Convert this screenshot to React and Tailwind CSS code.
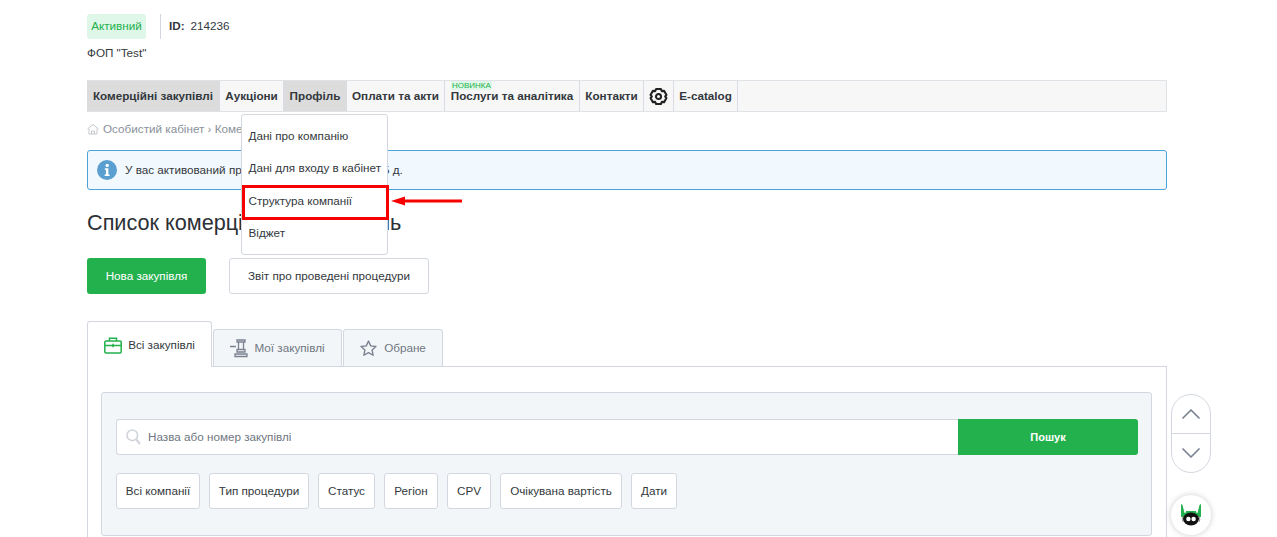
import React from "react";
import { ChevronUp, ChevronDown } from "lucide-react";

const navItems = [
  ["Комерційні закупівлі", "w-[133px]", true],
  ["Аукціони", "w-[64px]", false],
  ["Профіль", "w-[63px]", true],
  ["Оплати та акти", "w-[98px]", false],
];

function NavItem({ label, w, active }) {
  return (
    <div className={`${w} h-full flex items-center justify-center border-r border-[#d9dde3] text-[11.7px] font-bold text-[#33383d] ${active ? "bg-[#dcdcdc]" : ""}`}>
      {label}
    </div>
  );
}

function Filter({ children, w }) {
  return (
    <div className={`${w} h-[36px] flex items-center justify-center bg-white border border-[#d3d8e0] rounded-[3px] text-[11.7px] text-[#33383d]`}>
      {children}
    </div>
  );
}

export default function App() {
  return (
    <div className="relative h-[537px] w-[1277px] overflow-hidden bg-white text-[#33383d]" style={{ fontFamily: '"Liberation Sans", Arial, sans-serif' }}>
      <div className="ml-[87px] w-[1080px] pt-[14px]">
        <div className="flex items-center h-[25px]">
          <div className="w-[59px] h-[25px] pb-[2px] flex items-center justify-center rounded-[3px] bg-[#dff7e8] text-[11.7px] text-[#23b14d]">Активний</div>
          <div className="ml-[14px] w-px h-[25px] bg-[#d3d8e0]"></div>
          <div className="ml-[8px] -mt-[2px] text-[11.7px]"><span className="font-bold">ID:</span><span className="ml-[6px]">214236</span></div>
        </div>
        <div className="mt-[7px] h-[14px] leading-[14px] text-[11.7px]">ФОП "Test"</div>

        <div className="mt-[20px] h-[32px] flex bg-[#f7f7f7] border border-[#dfe2e6] border-l-0">
          {navItems.map(([l, w, a]) => <NavItem key={l} label={l} w={w} active={a} />)}
          <div className="relative w-[135px] h-full flex items-center justify-center border-r border-[#d9dde3] text-[11.7px] font-bold">
            Послуги та аналітика
            <span className="absolute left-[6px] top-0 h-[9px] leading-[9px] px-px bg-[#dff7e8] text-[8px] font-normal text-[#23b14d]">НОВИНКА</span>
          </div>
          <div className="w-[64px] h-full flex items-center justify-center border-r border-[#d9dde3] text-[11.7px] font-bold">Контакти</div>
          <div className="w-[30px] h-full flex items-center justify-center border-r border-[#d9dde3]">
            <svg width="19" height="19" viewBox="0 0 24 24" fill="none" stroke="#222" strokeWidth="2.6" strokeLinejoin="round">
              <path d="M9 2.5h6l1.2 2.7 2.9-.3 3 5.1-1.7 2 1.7 2-3 5.1-2.9-.3L15 21.5H9l-1.2-2.7-2.9.3-3-5.1 1.7-2-1.7-2 3-5.1 2.9.3z" />
              <circle cx="12" cy="12" r="3.2" />
            </svg>
          </div>
          <div className="w-[64px] h-full flex items-center justify-center border-r border-[#d9dde3] text-[11.7px] font-bold">E-catalog</div>
        </div>

        <div className="mt-[10px] h-[14px] flex items-center text-[11.7px] text-[#8b9199]">
          <svg width="12" height="12" viewBox="0 0 12 12" fill="none" stroke="#c4c8cd" strokeWidth="1" className="mr-[4px]">
            <path d="M0.5 6L6 1.5 11.5 6M2 5.5V11h8V5.5M4.5 11V8h3v3" />
          </svg>
          <span>Особистий кабінет › Комерційні закупівлі</span>
        </div>

        <div className="mt-[14px] h-[40px] flex items-center rounded-[3px] border border-[#4ba3d8] bg-[#f2f9fe] pl-[9px] text-[11.7px]">
          <svg width="20" height="20" viewBox="0 0 20 20" className="mr-[8px] shrink-0">
            <circle cx="10" cy="10" r="10" fill="#5a9fd0" />
            <circle cx="10.2" cy="5.4" r="1.7" fill="#fff" />
            <path d="M7.8 8.3h3.6v6.2h1.2v1.4H7.6v-1.4h1.3V9.7H7.8z" fill="#fff" />
          </svg>
          <span>У вас активований пробний період. Залишок – <span className="ml-[3px]">5 д.</span></span>
        </div>

        <h1 className="mt-[19px] h-[28px] leading-[28px] text-[21.65px] font-normal text-[#2b3036]">Список комерційних закупівель</h1>

        <div className="mt-[21px] flex gap-[23px]">
          <div className="w-[119px] h-[36px] flex items-center justify-center rounded-[3px] bg-[#23b14d] text-[11.7px] font-normal text-white">Нова закупівля</div>
          <div className="w-[200px] h-[36px] flex items-center justify-center rounded-[3px] border border-[#d3d8e0] bg-white text-[11.7px]">Звіт про проведені процедури</div>
        </div>

        <div className="mt-[27px] h-[46px] flex items-end border-b border-[#d3d8e0]">
          <div className="relative z-10 -mb-px w-[125px] h-[46px] flex items-center justify-center gap-[6px] pt-px rounded-t-[3px] border border-b-0 border-[#d3d8e0] bg-white text-[11.7px]">
            <svg width="18" height="17" viewBox="0 0 18 17" fill="none" stroke="#23b14d" strokeWidth="1.5">
              <rect x="0.8" y="4" width="16.4" height="12" rx="1.2" />
              <path d="M5.5 4V1.2h7V4M0.8 8.5h16.4M9 6.8v3.4M7.3 8.5h3.4" />
            </svg>
            <span>Всі закупівлі</span>
          </div>
          <div className="ml-[1px] w-[129px] h-[37px] flex items-center justify-center gap-[6px] rounded-t-[3px] border border-b-0 border-[#d3d8e0] bg-[#f3f6f9] text-[11.7px] text-[#6f7681]">
            <svg width="18" height="19" viewBox="0 0 18 19" fill="none" stroke="#7b8290" strokeWidth="1.3">
              <path d="M0 7.5h6M7 1h8v2H7zM8.5 3v7.5M13.5 3v7.5M7 10.5h8v2.5H7zM5 15h12v2.5H5z" />
            </svg>
            <span>Мої закупівлі</span>
          </div>
          <div className="ml-[1px] w-[100px] h-[37px] flex items-center justify-center gap-[7px] rounded-t-[3px] border border-b-0 border-[#d3d8e0] bg-[#f3f6f9] text-[11.7px] text-[#6f7681]">
            <svg width="17" height="16" viewBox="0 0 24 23" fill="none" stroke="#7b8290" strokeWidth="2" strokeLinejoin="round">
              <path d="M12 1.5l3.2 6.9 7.5.9-5.5 5.2 1.4 7.4L12 18.2l-6.6 3.7 1.4-7.4L1.3 9.3l7.5-.9z" />
            </svg>
            <span>Обране</span>
          </div>
        </div>

        <div className="h-[180px] border-x border-[#d3d8e0] pt-[25px] pl-[13px] pr-[14px]">
          <div className="h-[144px] rounded-[3px] border border-[#d3d8e0] bg-[#f3f6f9] pt-[26px] pl-[14px] pr-[13px]">
            <div className="h-[36px] flex">
              <div className="flex-1 flex items-center rounded-l-[3px] border border-r-0 border-[#d3d8e0] bg-white pl-[9px] text-[11.7px] text-[#6f7681]">
                <svg width="15" height="16" viewBox="0 0 15 16" fill="none" stroke="#d0d4da" strokeWidth="1.6" className="mr-[7px]">
                  <circle cx="6.3" cy="6.3" r="5.3" />
                  <path d="M10.2 10.5l3.8 4.5" strokeWidth="2" />
                </svg>
                <span>Назва або номер закупівлі</span>
              </div>
              <div className="w-[180px] flex items-center justify-center rounded-r-[3px] bg-[#23b14d] text-[11px] font-bold text-white">Пошук</div>
            </div>
            <div className="mt-[18px] flex gap-[9px]">
              <Filter w="w-[84px]">Всі компанії</Filter>
              <Filter w="w-[100px]">Тип процедури</Filter>
              <Filter w="w-[57px]">Статус</Filter>
              <Filter w="w-[54px]">Регіон</Filter>
              <Filter w="w-[44px]">CPV</Filter>
              <Filter w="w-[122px]">Очікувана вартість</Filter>
              <Filter w="w-[46px]">Дати</Filter>
            </div>
          </div>
        </div>
      </div>

      {/* dropdown overlay */}
      <div className="absolute left-[241px] top-[114px] w-[147px] h-[141px] rounded-[3px] border border-[#d3d8e0] bg-white text-[11.7px] text-[#33383d]">
        <div className="h-[32px] mt-[5px] pl-[6.5px] flex items-center whitespace-nowrap">Дані про компанію</div>
        <div className="h-[32px] pl-[6.5px] flex items-center whitespace-nowrap">Дані для входу в кабінет</div>
        <div className="h-[33px] pl-[6.5px] flex items-center whitespace-nowrap">Структура компанії</div>
        <div className="h-[32px] pl-[6.5px] flex items-center whitespace-nowrap">Віджет</div>
      </div>
      <div className="absolute left-[242px] top-[185px] w-[147px] h-[35px] border-[3px] border-[#f60000]"></div>
      <svg className="absolute left-[391px] top-[194px]" width="72" height="14" viewBox="0 0 72 14">
        <path d="M0 7L14 2.5V5.5H71V8.5H14V11.5Z" fill="#f60000" />
      </svg>

      {/* scroll buttons */}
      <div className="absolute left-[1171px] top-[394px] w-[40px] h-[79px] rounded-[20px] border border-[#d3d8e0] bg-white flex flex-col">
        <div className="flex-1 flex items-center justify-center border-b border-[#d3d8e0] text-[#7b8290]"><ChevronUp size={32} strokeWidth={1.3} /></div>
        <div className="flex-1 flex items-center justify-center text-[#7b8290]"><ChevronDown size={32} strokeWidth={1.3} /></div>
      </div>
      <div className="absolute left-[1171px] top-[495px] w-[40px] h-[40px] rounded-full bg-white shadow-[0_0_6px_rgba(0,0,0,0.2)] flex items-center justify-center">
        <svg width="22" height="24" viewBox="0 0 22 24">
          <path d="M1 1L2.5 2 4.5 10 9 8V14H1zM21 1L19.5 2 17.5 10 13 8V14H21z" fill="#23b14d" />
          <rect x="6" y="8" width="10" height="4" fill="#23b14d" />
          <ellipse cx="11" cy="16" rx="8" ry="6.5" fill="#111" />
          <path d="M3 13.5Q1.5 16 3 19M19 13.5Q20.5 16 19 19" stroke="#999" strokeWidth="1" fill="none" />
          <circle cx="8.4" cy="16" r="2.2" fill="#fff" />
          <circle cx="13.6" cy="16" r="2.2" fill="#fff" />
        </svg>
      </div>
    </div>
  );
}
